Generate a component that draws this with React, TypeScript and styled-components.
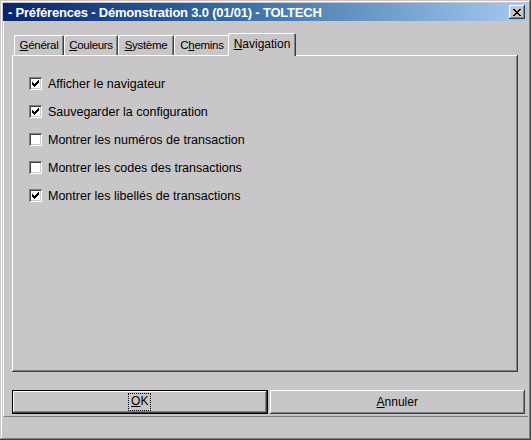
import React from "react";
import styled, { createGlobalStyle } from "styled-components";

const FACE = "#c9c6c9";
const SHADOW = "#808080";
const DARK = "#404040";
const LIGHT = "#ffffff";

const GlobalStyle = createGlobalStyle`
  html, body { margin: 0; padding: 0; background: ${FACE}; }
  body { font-family: "Liberation Sans", Arial, sans-serif; color: #000; }
  * { box-sizing: border-box; }
`;

const Window = styled.div`
  width: 531px;
  height: 440px;
  background: ${FACE};
  display: flex;
  flex-direction: column;
  padding: 3px 3px 2px 3px;
  box-shadow: inset -1px -1px ${DARK}, inset 1px 1px ${FACE}, inset -2px -2px ${SHADOW}, inset 2px 2px ${LIGHT};
`;

const TitleBar = styled.div`
  height: 18px;
  flex: 0 0 18px;
  display: flex;
  align-items: center;
  padding: 0 3px 0 5px;
  background: linear-gradient(to right, #0a246a 0%, #3a6ea5 45%, #a6caf0 100%);
`;

const Title = styled.div`
  flex: 1;
  color: #fff;
  font-weight: bold;
  font-size: 13px;
  white-space: nowrap;
  letter-spacing: -0.2px;
`;

const CloseButton = styled.div`
  width: 16px;
  height: 14px;
  background: ${FACE};
  display: flex;
  align-items: center;
  justify-content: center;
  box-shadow: inset -1px -1px ${DARK}, inset 1px 1px ${LIGHT}, inset -2px -2px ${SHADOW};
`;

const Client = styled.div`
  flex: 1;
  display: flex;
  flex-direction: column;
  padding: 12px 3px 2px 8px;
  border-left: 1px solid ${LIGHT};
  border-bottom: 1px solid ${SHADOW};
`;

const TabStrip = styled.div`
  display: flex;
  align-items: flex-end;
  height: 22px;
  padding-left: 2px;
  position: relative;
  z-index: 1;
`;

const Tab = styled.div<{ $w: number; $active?: boolean }>`
  width: ${(p) => p.$w + (p.$active ? 4 : 0)}px;
  height: ${(p) => (p.$active ? 23 : 20)}px;
  margin: ${(p) => (p.$active ? "0 -2px -1px -2px" : "0")};
  background: ${FACE};
  font-size: ${(p) => (p.$active ? 12 : 11.5)}px;
  letter-spacing: ${(p) => (p.$active ? "0" : "-0.3px")};
  display: flex;
  align-items: ${(p) => (p.$active ? "flex-start" : "center")};
  padding-top: ${(p) => (p.$active ? "4px" : "0")};
  justify-content: center;
  border-radius: 2px 2px 0 0;
  box-shadow: inset 1px 1px ${LIGHT}, inset -1px 0 ${DARK}, inset -2px 0 ${SHADOW};
  position: relative;
  z-index: ${(p) => (p.$active ? 2 : 1)};
  white-space: nowrap;
`;

const Key = styled.span`
  text-decoration: underline;
  text-underline-offset: 1px;
`;

const Panel = styled.div`
  height: 317px;
  margin-right: 7px;
  background: ${FACE};
  padding: 22px 0 0 17px;
  display: flex;
  flex-direction: column;
  gap: 15px;
  box-shadow: inset -1px -1px ${DARK}, inset 1px 1px ${LIGHT}, inset -2px -2px ${SHADOW};
`;

const Row = styled.label`
  display: flex;
  align-items: center;
  height: 13px;
  font-size: 12.5px;
  gap: 6px;
  white-space: nowrap;
`;

const Box = styled.span`
  width: 13px;
  height: 13px;
  flex: 0 0 13px;
  background: #fff;
  position: relative;
  box-shadow: inset 1px 1px ${SHADOW}, inset -1px -1px ${LIGHT}, inset 2px 2px ${DARK}, inset -2px -2px ${FACE};
  display: flex;
  align-items: center;
  justify-content: center;
`;

const ButtonRow = styled.div`
  display: flex;
  gap: 2px;
  margin-top: 18px;
  height: 24px;
`;

const Button = styled.div<{ $default?: boolean }>`
  flex: 1;
  height: 24px;
  background: ${FACE};
  font-size: 12px;
  display: flex;
  align-items: center;
  justify-content: center;
  box-shadow: ${(p) =>
    p.$default
      ? `inset 0 0 0 1px #000, inset -2px -2px ${DARK}, inset 2px 2px ${LIGHT}, inset -3px -3px ${SHADOW}`
      : `inset -1px -1px ${DARK}, inset 1px 1px ${LIGHT}, inset -2px -2px ${SHADOW}`};
`;

const Focus = styled.span`
  outline: 1px dotted #000;
  outline-offset: 0;
  padding: 1px 2px 2px 2px;
  line-height: 13px;
`;

const Footer = styled.div`
  height: 21px;
  flex: 0 0 21px;
`;

const checkPixels: [number, number, number][] = [
  [6, 0, 1],
  [5, 1, 2],
  [0, 2, 1],
  [4, 2, 3],
  [0, 3, 2],
  [3, 3, 3],
  [0, 4, 5],
  [1, 5, 3],
  [2, 6, 1],
];

const CheckMark = () => (
  <svg width="7" height="7" viewBox="0 0 7 7" shapeRendering="crispEdges">
    {checkPixels.map(([x, y, w], i) => (
      <rect key={i} x={x} y={y} width={w} height={1} fill="#000" />
    ))}
  </svg>
);

const CloseIcon = () => (
  <svg width="8" height="7" viewBox="0 0 8 7" shapeRendering="crispEdges">
    {[0, 1, 2, 3, 4, 5, 6].map((i) => (
      <g key={i}>
        <rect x={i} y={i} width={2} height={1} fill="#000" />
        <rect x={6 - i} y={i} width={2} height={1} fill="#000" />
      </g>
    ))}
  </svg>
);

const Check = ({ checked, label }: { checked: boolean; label: string }) => (
  <Row>
    <Box>{checked && <CheckMark />}</Box>
    <span>{label}</span>
  </Row>
);

const items = [
  { label: "Afficher le navigateur", checked: true },
  { label: "Sauvegarder la configuration", checked: true },
  { label: "Montrer les numéros de transaction", checked: false },
  { label: "Montrer les codes des transactions", checked: false },
  { label: "Montrer les libellés de transactions", checked: true },
];

export default function App() {
  return (
    <>
      <GlobalStyle />
      <Window>
        <TitleBar>
          <Title>- Préférences - Démonstration 3.0 (01/01) - TOLTECH</Title>
          <CloseButton>
            <CloseIcon />
          </CloseButton>
        </TitleBar>
        <Client>
          <TabStrip>
            <Tab $w={50}>
              <span><Key>G</Key>énéral</span>
            </Tab>
            <Tab $w={54}>
              <span><Key>C</Key>ouleurs</span>
            </Tab>
            <Tab $w={56}>
              <span><Key>S</Key>ystème</span>
            </Tab>
            <Tab $w={56}>
              <span>C<Key>h</Key>emins</span>
            </Tab>
            <Tab $w={64} $active>
              <span><Key>N</Key>avigation</span>
            </Tab>
          </TabStrip>
          <Panel>
            {items.map((it) => (
              <Check key={it.label} checked={it.checked} label={it.label} />
            ))}
          </Panel>
          <ButtonRow>
            <Button $default>
              <Focus><Key>O</Key>K</Focus>
            </Button>
            <Button>
              <span><Key>A</Key>nnuler</span>
            </Button>
          </ButtonRow>
        </Client>
        <Footer />
      </Window>
    </>
  );
}
